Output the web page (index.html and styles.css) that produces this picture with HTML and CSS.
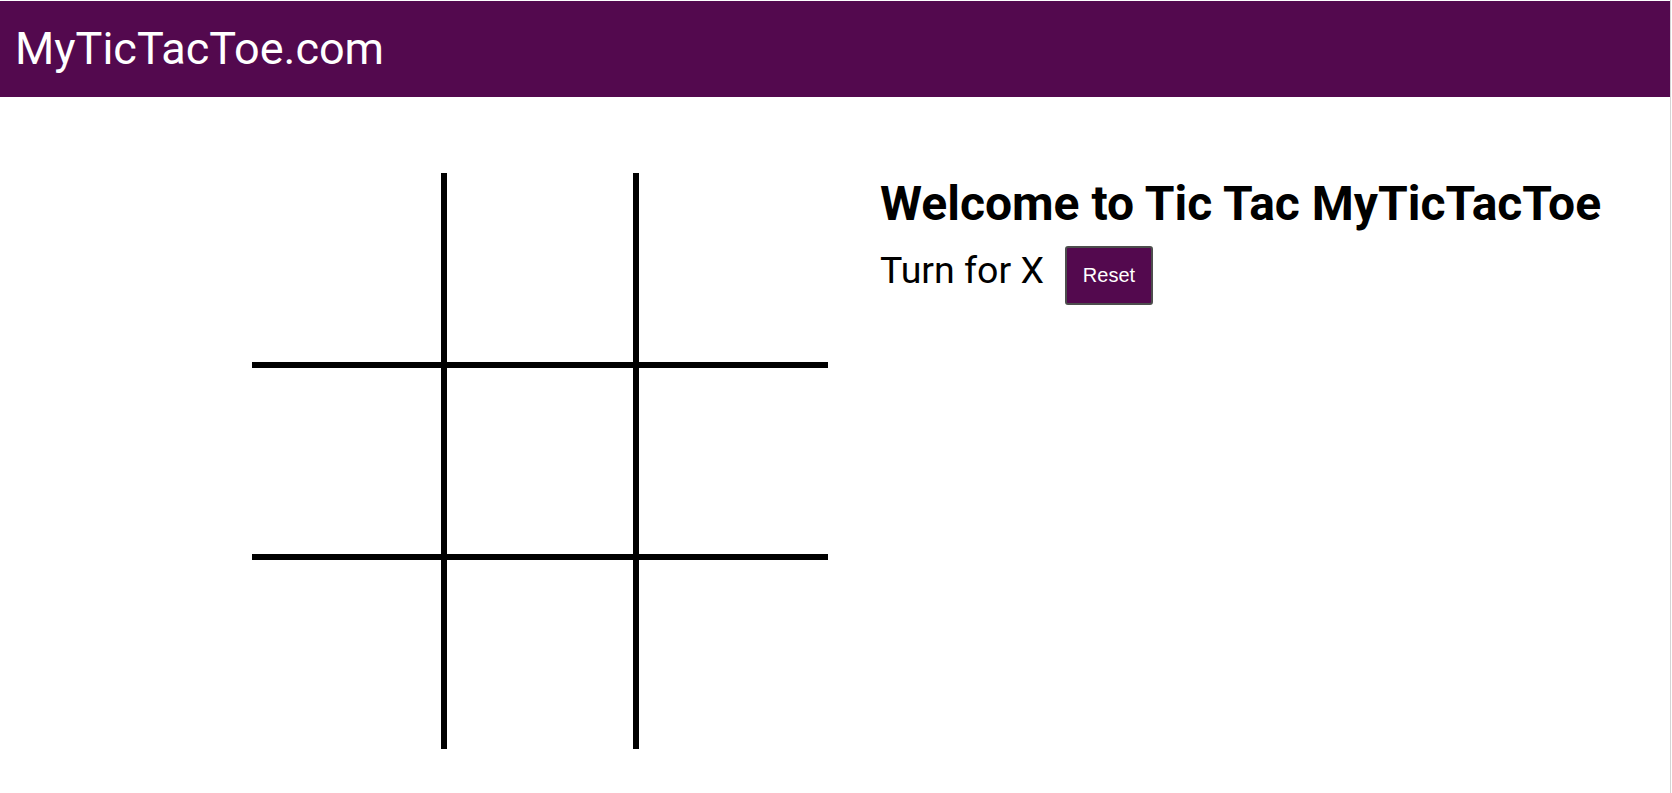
FILE: index.html
```html
<!DOCTYPE html>
<html>
<head>
<meta charset="utf-8">
<link rel="stylesheet" href="styles.css">
</head>
<body>
<div class="page">
  <header class="topbar">
    <div class="brand">MyTicTacToe.com</div>
  </header>
  <main class="content">
    <div class="board">
      <div class="cell c0"></div>
      <div class="cell c1"></div>
      <div class="cell c2"></div>
      <div class="cell c3"></div>
      <div class="cell c4"></div>
      <div class="cell c5"></div>
      <div class="cell c6"></div>
      <div class="cell c7"></div>
      <div class="cell c8"></div>
    </div>
    <section class="info">
      <h1 class="title">Welcome to Tic Tac MyTicTacToe</h1>
      <div class="status">
        <span class="turn">Turn for X</span>
        <button class="reset">Reset</button>
      </div>
    </section>
  </main>
</div>
</body>
</html>
```

FILE: styles.css
```css
html, body {
  margin: 0;
  padding: 0;
  background: #ffffff;
}
.page {
  width: 1671px;
  height: 793px;
  border-right: 1px solid #d4d4d4;
  box-sizing: border-box;
  padding-top: 1px;
  font-family: Roboto, "Liberation Sans", sans-serif;
}
.topbar {
  height: 96px;
  background: #53094e;
  display: flex;
  align-items: center;
  padding-left: 15px;
}
.brand {
  color: #ffffff;
  font-size: 45px;
  font-weight: 400;
  line-height: 1;
  margin-top: -2px;
}
.content {
  display: flex;
  padding-top: 76px;
  padding-left: 252px;
}
.board {
  display: grid;
  grid-template-columns: repeat(3, 192px);
  grid-template-rows: repeat(3, 192px);
  width: 576px;
  height: 576px;
}
.cell {
  box-sizing: border-box;
}
.c0, .c1, .c3, .c4 { border-right: 3px solid #000; border-bottom: 3px solid #000; }
.c1, .c4 { border-left: 3px solid #000; }
.c2, .c5 { border-bottom: 3px solid #000; border-left: 3px solid #000; }
.c3, .c4, .c5 { border-top: 3px solid #000; }
.c6, .c7 { border-right: 3px solid #000; border-top: 3px solid #000; }
.c7, .c8 { border-left: 3px solid #000; border-top: 3px solid #000; }
.info {
  margin-left: 52px;
}
.title {
  margin: 0;
  font-size: 48px;
  font-weight: 700;
  line-height: 1;
  color: #000;
  padding-top: 7px;
}
.status {
  display: flex;
  align-items: flex-start;
  margin-top: 18px;
}
.turn {
  font-size: 37.5px;
  font-weight: 400;
  line-height: 1;
  color: #000;
  margin-top: 6px;
}
.reset {
  margin-left: 21px;
  width: 88px;
  height: 59px;
  background: #53094e;
  color: #fff;
  border: 2px solid #4d4d4d;
  border-radius: 3px;
  font-family: "Liberation Sans", Arial, sans-serif;
  font-size: 20px;
  padding: 0;
  cursor: pointer;
}
```
